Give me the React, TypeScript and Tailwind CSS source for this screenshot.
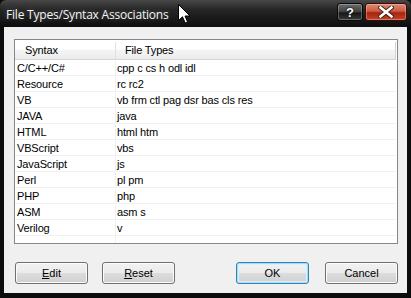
import React from "react";

const rows: [string, string][] = [
  ["C/C++/C#", "cpp c cs h odl idl"],
  ["Resource", "rc rc2"],
  ["VB", "vb frm ctl pag dsr bas cls res"],
  ["JAVA", "java"],
  ["HTML", "html htm"],
  ["VBScript", "vbs"],
  ["JavaScript", "js"],
  ["Perl", "pl pm"],
  ["PHP", "php"],
  ["ASM", "asm s"],
  ["Verilog", "v"],
];

function Button({
  label,
  accel,
  isDefault,
  className,
}: {
  label: string;
  accel?: number;
  isDefault?: boolean;
  className?: string;
}) {
  const text =
    accel === undefined ? (
      label
    ) : (
      <>
        {label.slice(0, accel)}
        <span className="underline underline-offset-[1px]">{label[accel]}</span>
        {label.slice(accel + 1)}
      </>
    );
  return (
    <button
      type="button"
      className={
        "h-[22px] w-[73px] rounded-[3px] border bg-[linear-gradient(#f2f2f2_0%,#ebebeb_50%,#dddddd_50%,#cfcfcf_100%)] pt-[1px] text-[11px] text-black " +
        (isDefault
          ? "border-[#3c7fb1] shadow-[inset_0_0_0_1px_#9fe0f8,inset_0_0_0_2px_#d6f1fb] "
          : "border-[#707070] shadow-[inset_0_0_0_1px_#fcfcfc] ") +
        (className ?? "")
      }
    >
      {text}
    </button>
  );
}

export default function App() {
  return (
    <div
      className="relative flex h-[298px] w-[411px] flex-col overflow-hidden bg-[#0c0c0c]"
      style={{ fontFamily: '"Liberation Sans", Arial, sans-serif' }}
    >
      {/* title bar */}
      <div className="relative flex h-[27px] shrink-0 items-center rounded-t-[6px] bg-[linear-gradient(#484848_0%,#262626_35%,#0d0d0d_100%)] pl-[6px]">
        <span
          className="pt-[2px] text-[12px] tracking-[-0.2px] text-[#f4f4f4] [text-shadow:0_0_6px_rgba(255,255,255,0.25)]"
          style={{ fontFamily: '"Open Sans", "Noto Sans", sans-serif' }}
        >
          File Types/Syntax Associations
        </span>
        <div className="ml-auto mr-[4px] mt-[3px] flex h-[18px] gap-[2px] self-start">
          <div className="flex w-[26px] items-center justify-center rounded-[3px] border border-[#0a0a0a] bg-[linear-gradient(#6d6d6d_0%,#3e3e3e_50%,#161616_55%,#3a3a3a_100%)] shadow-[inset_0_0_0_1px_rgba(255,255,255,0.25)]">
            <span className="text-[13px] font-bold leading-none text-white [text-shadow:0_0_2px_#000,0_0_1px_#000]">
              ?
            </span>
          </div>
          <div className="flex w-[42px] items-center justify-center rounded-[3px] border border-[#3a0c04] bg-[linear-gradient(#e08a76_0%,#c95a42_45%,#a7240d_55%,#c2442a_100%)] shadow-[inset_0_0_0_1px_rgba(255,220,210,0.35)]">
            <svg width="16" height="12" viewBox="0 0 16 12">
              <path
                d="M2.5 1.5 L13.5 10.5 M13.5 1.5 L2.5 10.5"
                stroke="#3b1a14"
                strokeWidth="4.4"
                strokeLinecap="square"
                fill="none"
              />
              <path
                d="M2.5 1.5 L13.5 10.5 M13.5 1.5 L2.5 10.5"
                stroke="#ffffff"
                strokeWidth="2.6"
                strokeLinecap="square"
                fill="none"
              />
            </svg>
          </div>
        </div>
      </div>

      {/* client area */}
      <div className="mx-[4px] mb-[5px] flex flex-1 flex-col bg-[#f0f0f0] pl-[10px] pr-[9px] pt-[12px]">
        <div className="flex h-[205px] flex-col border border-[#828790] bg-white pr-[1px]">
          <div className="flex h-[20px] shrink-0 border-b border-[#d5d5d5] bg-[linear-gradient(#ffffff_0%,#ffffff_45%,#f4f4f4_55%,#ececec_100%)] pt-[2px] text-[11px] tracking-[-0.15px] text-black">
            <div className="flex w-[101px] items-center border-r border-[#e0e0e0] pl-[10px]">Syntax</div>
            <div className="flex flex-1 items-center border-r border-[#d5d5d5] pl-[9px]">File Types</div>
          </div>
          <div className="flex flex-1 flex-col">
            {rows.map(([syntax, types]) => (
              <div
                key={syntax}
                className="flex h-[16px] shrink-0 border-b border-[#f0f0f0] pt-[1px] text-[11px] leading-[14px] tracking-[-0.15px] text-black"
              >
                <div className="w-[101px] border-r border-[#f0f0f0] pl-[2px]">{syntax}</div>
                <div className="flex-1 pl-[1px]">{types}</div>
              </div>
            ))}
            <div className="flex flex-1">
              <div className="w-[101px] border-r border-[#f0f0f0]" />
            </div>
          </div>
        </div>

        <div className="mt-[18px] flex pl-[1px]">
          <Button label="Edit" accel={0} />
          <Button label="Reset" accel={0} className="ml-[14px]" />
          <Button label="OK" isDefault className="ml-auto" />
          <Button label="Cancel" className="ml-[16px]" />
        </div>
      </div>

      {/* mouse pointer */}
      <svg
        className="absolute left-[178px] top-[4px]"
        width="13"
        height="20"
        viewBox="0 0 13 20"
      >
        <path
          d="M0.5 0.5 L0.5 16.5 L4.5 12.8 L7.2 19 L9.6 18 L7 12 L12 12 Z"
          fill="#ffffff"
          stroke="#000000"
          strokeWidth="1"
          strokeLinejoin="miter"
        />
      </svg>
    </div>
  );
}
